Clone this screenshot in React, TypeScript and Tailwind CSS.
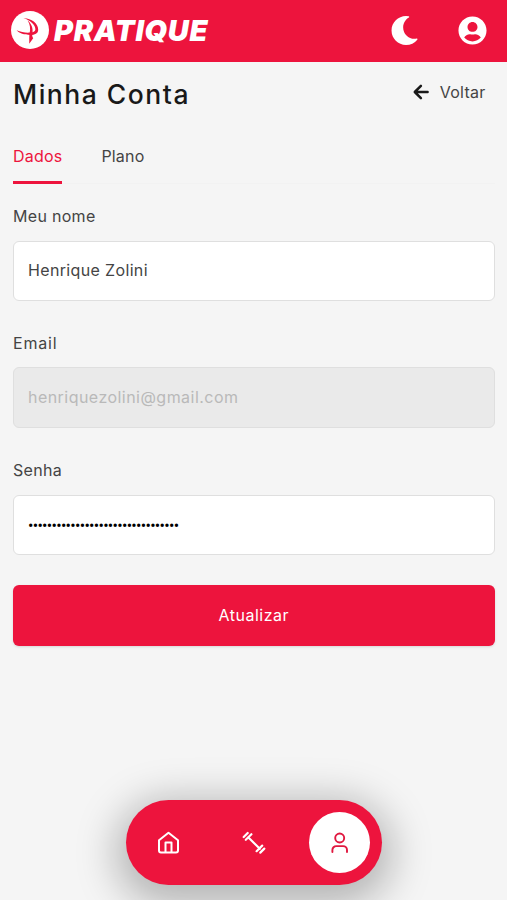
import React from "react";
import { FaMoon, FaUserCircle } from "react-icons/fa";

const BackArrow = () => (
  <svg viewBox="0 0 16 16" className="h-4 w-4" fill="none" stroke="#191919" strokeWidth="2.5" strokeLinecap="round" strokeLinejoin="round">
    <path d="M7.900 1.800 1.800 8l6.100 6.200M2.200 8h12.400" />
  </svg>
);

const LogoMark = () => (
  <svg viewBox="0 0 38 38" className="h-[38px] w-[38px]">
    <circle cx="19" cy="19" r="19" fill="#fff" />
    <path d="M12.500 7.300c7.300-.3 14.700 4.800 14.700 11.400 0 3.700-3.300 5.300-8 5.300C13.500 24 8 22.300 5.600 19.300c4.500 2 9.400 2.700 13.600 2.300 3.600-.3 5.200-1.300 5.200-3.300 0-4.200-4.800-9-11.900-11Z" fill="#ed143d" />
    <path d="M16.500 9.500c3.600 2.600 5.600 7.200 5 12.100-.3 2.400-.7 3.400.7 5.700l-4 5.500c.3-3.800-.3-6.800.5-10.700.9-4.700.5-8.900-2.200-12.600Z" fill="#ed143d" />
  </svg>
);

const HomeIcon = () => (
  <svg viewBox="0 0 24 24" className="h-6 w-6" fill="none" stroke="#fff" strokeWidth="2" strokeLinejoin="round">
    <path d="M2 9.300 11.500 1.800 21 9.300v10.200a2 2 0 0 1-2 2H4a2 2 0 0 1-2-2z" />
    <path d="M8.500 21.400V11.400h6v10" />
  </svg>
);

const DumbbellIcon = () => (
  <svg viewBox="0 0 24 24" className="h-6 w-6" fill="none" stroke="#fff" strokeWidth="2.200" strokeLinecap="round">
    <path d="m6.200 6.200 11.600 11.600M3.800 8.800l5.600-5.600M14.600 20.200l5.600-5.600M1.700 6l4-4M18.300 21.600l4-4" />
  </svg>
);

const UserIcon = () => (
  <svg viewBox="0 0 24 24" className="h-6 w-6" fill="none" stroke="#e0183f" strokeWidth="1.900" strokeLinecap="round">
    <circle cx="11.700" cy="7" r="4.500" />
    <path d="M4.400 21v-2a3.900 3.900 0 0 1 3.900-3.900h6.800a3.900 3.900 0 0 1 3.900 3.900v2" />
  </svg>
);

const App: React.FC = () => {
  return (
    <div className="relative h-[900px] w-full overflow-hidden bg-[#f5f5f5] font-['Inter',sans-serif] text-base text-[#444]">
      {/* Header */}
      <header className="flex h-[62px] items-center justify-between bg-[#ed143d] pr-[20px] pl-[11px] pb-[2px] text-white">
        <div className="flex items-center gap-[5px]">
          <LogoMark />
          <span className="text-[29px] leading-none font-black tracking-[0.7px] italic">PRATIQUE</span>
        </div>
        <div className="flex items-center gap-[39px]">
          <FaMoon className="h-[29px] w-[29px]" />
          <FaUserCircle className="h-[29px] w-[29px]" />
        </div>
      </header>

      <main className="pr-[12.5px] pl-[13px]">
        <div className="flex h-[64px] items-center justify-between">
          <h1 className="pt-px text-[26.5px] font-medium tracking-[1.5px] text-[#191919]">Minha Conta</h1>
          <button className="flex items-center gap-[11px] pr-[9px] pb-[5px] tracking-[0.25px]">
            <BackArrow />
            Voltar
          </button>
        </div>

        {/* Tabs */}
        <nav className="flex h-[58px] gap-[39px] border-b border-[#f2f2f2] tracking-[0.2px]">
          <button className="h-[58px] border-b-[3px] border-[#ed143d] pt-[4px] text-[#ed143d]">Dados</button>
          <button className="h-[58px] border-b-[3px] border-transparent pt-[4px]">Plano</button>
        </nav>

        {/* Form */}
        <form className="mt-[20px] tracking-[0.3px]">
          <label className="block">
            <span className="block h-6 leading-6">Meu nome</span>
            <input className="mt-[13px] block h-[60px] w-full rounded-md border border-[#dfdfdf] bg-white px-[14px] pb-[3px] tracking-[0.35px]" defaultValue="Henrique Zolini" />
          </label>
          <label className="mt-[30px] block">
            <span className="block h-6 leading-6 tracking-[0.8px]">Email</span>
            <input className="mt-[12px] block h-[61px] w-full rounded-md border border-[#dfdfdf] bg-[#eaeaea] px-[14px] pb-[2px] tracking-[0.46px] text-[#b9b9b9]" defaultValue="henriquezolini@gmail.com" disabled />
          </label>
          <label className="mt-[30px] block">
            <span className="block h-6 leading-6">Senha</span>
            <div className="mt-[13px] flex h-[60px] w-full items-center rounded-md border border-[#dfdfdf] bg-white px-[14px] pt-px text-black">
              <span className="font-['Roboto',sans-serif] text-base tracking-[-0.7px]">{"•".repeat(32)}</span>
            </div>
          </label>
          <button type="button" className="mt-[30px] h-[61px] w-full rounded-md bg-[#ed143d] pb-[2px] tracking-[0.5px] text-white shadow-sm">
            Atualizar
          </button>
        </form>
      </main>

      {/* Bottom navigation */}
      <nav className="absolute top-[800px] left-[126px] flex h-[85px] w-[256px] items-center justify-between rounded-full bg-[#ed143d] px-3 shadow-[0_10px_40px_10px_rgba(0,0,0,0.27)]">
        <button className="flex h-[61px] w-[61px] items-center justify-center">
          <HomeIcon />
        </button>
        <button className="flex h-[61px] w-[61px] items-center justify-center">
          <DumbbellIcon />
        </button>
        <button className="flex h-[61px] w-[61px] items-center justify-center rounded-full bg-white">
          <UserIcon />
        </button>
      </nav>
    </div>
  );
};

export default App;
